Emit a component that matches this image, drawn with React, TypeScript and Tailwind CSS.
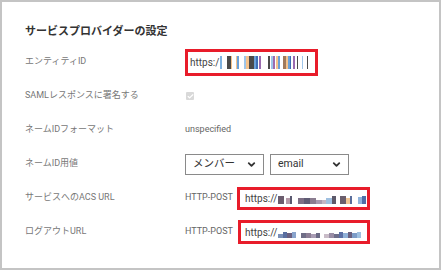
import { ChevronDown, Check } from "lucide-react"

const font = "font-['Roboto','Noto_Sans_CJK_JP',sans-serif]"

// blurred-out url pieces (masked in the screenshot)
const entityStripes: [number, string][] = [
  [1, "#7fb2e0"], [3, "#fff"], [2, "#4a4a4a"], [1, "#f4c38d"], [2, "#fff"], [1, "#f4c38d"], [1, "#6aa0d8"],
  [3, "#fff"], [1, "#9fc6ea"], [2, "#f4c38d"], [3, "#4a4a4a"], [1, "#6aa0d8"], [1, "#3f6fb5"], [1, "#fff"],
  [1, "#9b6bb0"], [4, "#fff"], [1, "#4a4a4a"], [1, "#fff"], [1, "#9fc6ea"], [1, "#9b6bb0"], [1, "#fff"],
  [1, "#f4c38d"], [1, "#6aa0d8"], [2, "#fff"], [2, "#a07a5c"], [1, "#f4c38d"], [1, "#6aa0d8"], [1, "#3f6fb5"],
  [1, "#fff"], [1, "#9b6bb0"], [1, "#fff"], [1, "#4a4a4a"], [2, "#fff"], [1, "#9fc6ea"], [2, "#fff"], [1, "#4a4a4a"],
]

const acsBlocks: [number, number, string][] = [
  [3, 8, "#6b5d6e"], [1, 4, "#fff"], [2, 6, "#b49aa8"], [1, 8, "#5a5a70"], [3, 3, "#fff"], [3, 6, "#7c6f85"],
  [3, 6, "#5f5c75"], [3, 6, "#8a7d90"], [3, 4, "#a79bb0"], [2, 4, "#c3b6c4"], [3, 6, "#9fc0e0"], [2, 8, "#5d5a6a"],
  [2, 3, "#fff"], [3, 8, "#6a5e6c"], [2, 6, "#f0c695"], [1, 8, "#5a6e9c"], [3, 3, "#fff"], [2, 7, "#8fb4dc"],
  [2, 8, "#4f6fa7"],
]

const logoutBlocks: [number, number, string][] = [
  [3, 4, "#7a8fb8"], [2, 6, "#5a6ea0"], [3, 5, "#6b6080"], [2, 6, "#8aa4cc"], [3, 3, "#fff"], [3, 5, "#6f6d86"],
  [3, 5, "#8d7f96"], [3, 4, "#a99cb4"], [2, 5, "#6b6a86"], [2, 3, "#fff"], [3, 4, "#c9bcc8"], [3, 5, "#9a8ea6"],
  [3, 4, "#6e6e8a"], [2, 6, "#5b6fa5"], [3, 5, "#8fb0d8"], [2, 6, "#6a6080"], [3, 5, "#7d9cc8"], [2, 6, "#9fc0e0"],
]

function Masked({ blocks, scale }: { blocks: [number, number, string][]; scale: number }) {
  return (
    <span className="flex items-end h-[9px] mt-[2px]">
      {blocks.map(([w, h, c], i) => (
        <span key={i} className="block" style={{ width: Math.round(w * scale), height: h, background: c }} />
      ))}
    </span>
  )
}

function Row({ label, children }: { label: string; children?: React.ReactNode }) {
  return (
    <div className="flex items-center h-[34px]">
      <div className="w-[160px] text-[9px] text-[#777]">{label}</div>
      <div className="flex items-center">{children}</div>
    </div>
  )
}

function Select({ value }: { value: string }) {
  return (
    <div className="flex items-center justify-between w-[79px] h-[21px] border border-[#8a8a8a] bg-white pl-[7px] pr-[6px] text-[10.5px] text-[#333]">
      <span>{value}</span>
      <ChevronDown size={11} strokeWidth={4} className="text-[#333]" />
    </div>
  )
}

export default function App() {
  return (
    <div className={`w-[443px] h-[274px] bg-white ${font}`}>
      <div className="w-[441px] h-[270px] border-2 border-[#c4c4c4] pl-[23px]">
        <div className="mt-[20px] h-[20px] flex items-center text-[11px] font-bold text-[#333]">
          サービスプロバイダーの設定
        </div>
        <div className="mt-[3px]">
          <Row label="エンティティID">
            <div className="w-[133px] h-[27px] border-[3px] border-[#e81c2a] bg-white flex items-center pl-[2px] overflow-hidden">
              <span className="text-[10px] text-[#444]">https:/</span>
              <span className="flex items-center h-[13px] ml-[1px]">
                {entityStripes.map(([w, c], i) => (
                  <span key={i} className="block h-[13px]" style={{ width: w * 1.7, background: c }} />
                ))}
              </span>
            </div>
          </Row>
          <Row label="SAMLレスポンスに署名する">
            <div className="ml-[1px] w-[8px] h-[8px] rounded-[1px] bg-[#d9d9d9] flex items-center justify-center">
              <Check size={7} strokeWidth={4} className="text-white" />
            </div>
          </Row>
          <Row label="ネームIDフォーマット">
            <span className="text-[9px] text-[#666]">unspecified</span>
          </Row>
          <Row label="ネームID用値">
            <div className="flex gap-[6px]">
              <Select value="メンバー" />
              <Select value="email" />
            </div>
          </Row>
          <Row label="サービスへのACS URL">
            <span className="text-[9px] text-[#666] w-[52px]">HTTP-POST</span>
            <div className="w-[133px] h-[23px] border-[3px] border-[#e81c2a] bg-white flex items-center pl-[5px] overflow-hidden">
              <span className="text-[10px] text-[#444] mr-[1px]">https://</span>
              <Masked blocks={acsBlocks} scale={1.9} />
            </div>
          </Row>
          <Row label="ログアウトURL">
            <span className="text-[9px] text-[#666] w-[53px]">HTTP-POST</span>
            <div className="w-[132px] h-[24px] border-[3px] border-[#e81c2a] bg-white flex items-center pl-[4px] overflow-hidden">
              <span className="text-[10px] text-[#444] mr-[1px]">https://</span>
              <Masked blocks={logoutBlocks} scale={1.8} />
            </div>
          </Row>
        </div>
      </div>
    </div>
  )
}
